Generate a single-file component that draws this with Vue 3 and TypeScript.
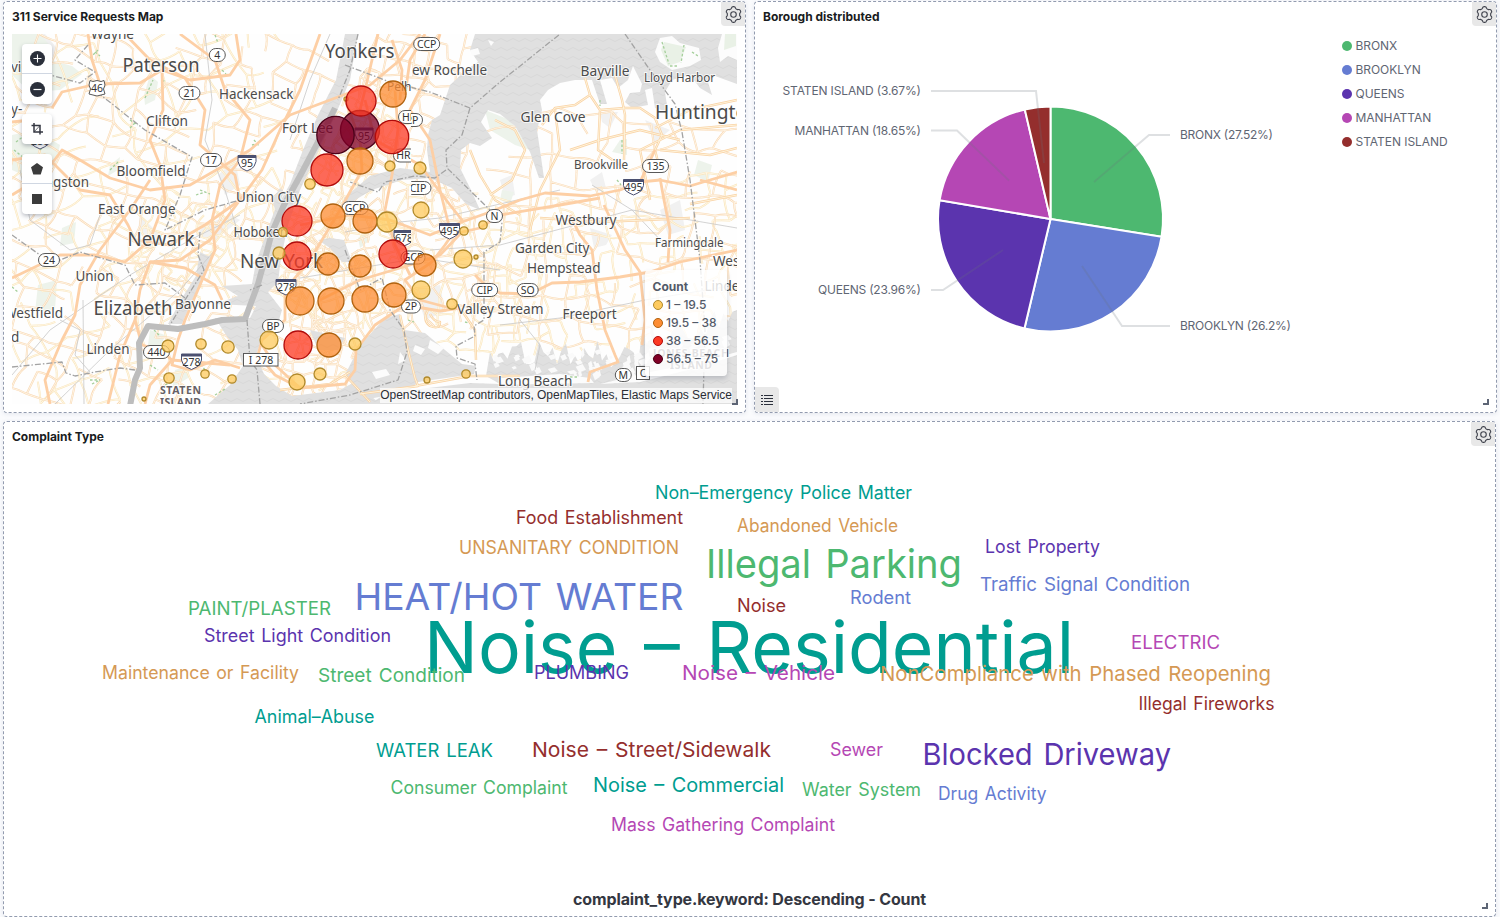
<script setup lang="ts">
interface Word { t: string; x: number; y: number; w: number; s: number; c: string }
interface Place { t: string; x: number; y: number; w?: number; s: number }
interface Pill { t: string; x: number; y: number; w: number; clip?: string }

const GREEN = '#4db870'
const BLUE = '#657cd2'
const PURPLE = '#5b34ae'
const PINK = '#b547b4'
const RED = '#942e2d'
const TEAL = '#009d90'
const ORANGE = '#d59954'

/* gear outline with six rounded teeth */
const gearPath = (() => {
  const pts: string[] = []
  for (let i = 0; i < 120; i++) {
    const a = (i / 120) * Math.PI * 2
    const k = Math.cos(6 * (a - Math.PI / 2))
    const r = 6.6 + 0.85 * Math.tanh(1.8 * k)
    pts.push(`${(8 + r * Math.cos(a)).toFixed(2)} ${(8 + r * Math.sin(a)).toFixed(2)}`)
  }
  return `M${pts.join('L')}Z`
})()

/* pie */
const slices = [
  { name: 'BRONX', pct: 27.52, color: GREEN },
  { name: 'BROOKLYN', pct: 26.2, color: BLUE },
  { name: 'QUEENS', pct: 23.96, color: PURPLE },
  { name: 'MANHATTAN', pct: 18.65, color: PINK },
  { name: 'STATEN ISLAND', pct: 3.67, color: RED },
]
const CX = 1050.5
const CY = 219
const R = 112.5
let turn = 0
const arcs = slices.map((s) => {
  const a0 = (turn / 100) * Math.PI * 2
  turn += s.pct
  const a1 = (turn / 100) * Math.PI * 2
  const p = (a: number) => `${(CX + R * Math.sin(a)).toFixed(2)} ${(CY - R * Math.cos(a)).toFixed(2)}`
  return { color: s.color, d: `M${CX} ${CY}L${p(a0)}A${R} ${R} 0 0 1 ${p(a1)}Z` }
})
const leaders = [
  '931,91 1036,91 1044,163',
  '931,130.5 957,130.5 1009,180.5',
  '931,290 943,290 1003,250',
  '1170,135 1149,135 1094,182',
  '1170,326 1122,326 1082,266',
]
const pieLabels = [
  { t: 'STATEN ISLAND (3.67%)', x: 782.5, y: 95, w: 138.5 },
  { t: 'MANHATTAN (18.65%)', x: 794.5, y: 135, w: 126.5 },
  { t: 'QUEENS (23.96%)', x: 818, y: 294, w: 103 },
  { t: 'BRONX (27.52%)', x: 1180, y: 139, w: 93 },
  { t: 'BROOKLYN (26.2%)', x: 1180, y: 330, w: 111 },
]

/* word cloud */
const words: Word[] = [
  { t: 'Noise – Residential', x: 424, y: 673, w: 650, s: 72, c: TEAL },
  { t: 'Illegal Parking', x: 706, y: 578, w: 256, s: 39.5, c: GREEN },
  { t: 'HEAT/HOT WATER', x: 354.5, y: 610, w: 329, s: 37, c: BLUE },
  { t: 'Blocked Driveway', x: 922.5, y: 765, w: 248.5, s: 30, c: PURPLE },
  { t: 'NonCompliance with Phased Reopening', x: 880, y: 681, w: 391, s: 20.5, c: ORANGE },
  { t: 'Noise – Street/Sidewalk', x: 532, y: 756.7, w: 239, s: 20.5, c: RED },
  { t: 'Noise – Commercial', x: 593, y: 791.8, w: 191, s: 20, c: TEAL },
  { t: 'Noise – Vehicle', x: 682, y: 680, w: 153, s: 20, c: PINK },
  { t: 'Street Condition', x: 318, y: 682, w: 147, s: 19, c: GREEN },
  { t: 'Traffic Signal Condition', x: 980, y: 590.7, w: 210, s: 18.5, c: BLUE },
  { t: 'Maintenance or Facility', x: 102, y: 679, w: 197, s: 18, c: ORANGE },
  { t: 'Non–Emergency Police Matter', x: 655, y: 499, w: 257, s: 18, c: TEAL },
  { t: 'Food Establishment', x: 516, y: 523.8, w: 167, s: 18, c: RED },
  { t: 'Abandoned Vehicle', x: 737, y: 531.8, w: 161, s: 18, c: ORANGE },
  { t: 'UNSANITARY CONDITION', x: 459, y: 554, w: 220, s: 18, c: ORANGE },
  { t: 'Lost Property', x: 985, y: 552.8, w: 115, s: 18, c: PURPLE },
  { t: 'Rodent', x: 850, y: 603.8, w: 61, s: 18, c: BLUE },
  { t: 'Noise', x: 737, y: 612, w: 49, s: 18, c: RED },
  { t: 'PAINT/PLASTER', x: 188, y: 614.8, w: 143, s: 18, c: GREEN },
  { t: 'Street Light Condition', x: 204, y: 642, w: 187, s: 18, c: PURPLE },
  { t: 'ELECTRIC', x: 1131, y: 649, w: 89, s: 18, c: PINK },
  { t: 'PLUMBING', x: 534, y: 678.8, w: 95, s: 18, c: PURPLE },
  { t: 'Illegal Fireworks', x: 1138.5, y: 710, w: 136, s: 18, c: RED },
  { t: 'Animal–Abuse', x: 254.5, y: 723, w: 120, s: 18, c: TEAL },
  { t: 'WATER LEAK', x: 376, y: 756.8, w: 117, s: 18, c: TEAL },
  { t: 'Sewer', x: 830, y: 755.8, w: 53, s: 18, c: PINK },
  { t: 'Consumer Complaint', x: 390.5, y: 793.8, w: 177, s: 18, c: GREEN },
  { t: 'Water System', x: 802, y: 796, w: 119, s: 18, c: GREEN },
  { t: 'Drug Activity', x: 938, y: 800, w: 108.5, s: 18, c: BLUE },
  { t: 'Mass Gathering Complaint', x: 611, y: 831, w: 224, s: 18, c: PINK },
]

/* street network, deterministic so the base map is stable between renders */
let seed = 7
const rnd = () => {
  seed = (seed * 16807) % 2147483647
  return seed / 2147483647
}
function streets(x0: number, y0: number, x1: number, y1: number, step: number, keep: number, rot: number): string {
  const cx = (x0 + x1) / 2
  const cy = (y0 + y1) / 2
  const nx = Math.ceil((x1 - x0) / step)
  const ny = Math.ceil((y1 - y0) / step)
  const grid: number[][][] = []
  for (let j = 0; j <= ny; j++) {
    const row: number[][] = []
    for (let i = 0; i <= nx; i++) {
      const x = x0 + i * step + (rnd() - 0.5) * step * 0.55 - cx
      const y = y0 + j * step + (rnd() - 0.5) * step * 0.55 - cy
      row.push([cx + x * Math.cos(rot) - y * Math.sin(rot), cy + x * Math.sin(rot) + y * Math.cos(rot)])
    }
    grid.push(row)
  }
  let d = ''
  const seg = (a: number[], b: number[]) => {
    const mx = (a[0] + b[0]) / 2 + (rnd() - 0.5) * step * 0.3
    const my = (a[1] + b[1]) / 2 + (rnd() - 0.5) * step * 0.3
    d += `M${a[0].toFixed(1)} ${a[1].toFixed(1)}Q${mx.toFixed(1)} ${my.toFixed(1)} ${b[0].toFixed(1)} ${b[1].toFixed(1)}`
  }
  for (let j = 0; j <= ny; j++) {
    for (let i = 0; i <= nx; i++) {
      if (i < nx && rnd() < keep) seg(grid[j][i], grid[j][i + 1])
      if (j < ny && rnd() < keep) seg(grid[j][i], grid[j + 1][i])
    }
  }
  return d
}
const roadsTan = [
  streets(-20, 10, 350, 430, 20, 0.66, 0.35),
  streets(360, 20, 470, 180, 15, 0.72, 0.25),
  streets(300, 200, 480, 330, 14, 0.75, -0.3),
  streets(480, 120, 780, 340, 23, 0.68, 0.1),
  streets(285, 320, 350, 395, 11, 0.8, 0.15),
].join('')
const roadsYellow = [
  streets(-20, 30, 340, 420, 24, 0.5, -0.4),
  streets(140, 200, 220, 290, 9, 0.6, 0.5),
  streets(330, 190, 540, 330, 15, 0.65, 0.2),
  streets(480, 190, 740, 345, 15, 0.45, -0.15),
  streets(300, 100, 360, 300, 9, 0.6, 0.45),
].join('')

/* ragged north shore of the southern bays, and the marsh islets inside them */
const southBay = (() => {
  let d = 'M486 376L490 352'
  for (let x = 494; x < 737; x += 4.5) {
    const base = x < 600 ? 352 : x < 640 ? 356 : 340 - (x - 640) * 0.22
    d += `L${x} ${(base + (rnd() - 0.5) * 26).toFixed(1)}`
  }
  return `${d}L737 310V404H370L382 396L420 389L470 383L500 384Z`
})()
const marsh = (() => {
  let d = ''
  for (let i = 0; i < 85; i++) {
    const x = 492 + rnd() * 235
    const y = 350 + rnd() * 24 - (x > 645 ? 14 : 0)
    const a = 2 + rnd() * 5
    const b = 2 + rnd() * 5
    d += `M${x.toFixed(1)} ${y.toFixed(1)}l${a.toFixed(1)} ${(-b / 2).toFixed(1)}l${(a / 2).toFixed(1)} ${b.toFixed(1)}l${(-a).toFixed(1)} ${(b / 2).toFixed(1)}z`
  }
  return d
})()

const highways = [
  'M12 195L40 178L56 158L62 150L80 160L110 178L150 190L190 185L225 165L250 150L290 115L330 100L370 85L400 60L420 34',
  'M12 122L40 119M52 108L62 92L97 84L140 83L162 70L190 80L230 75L240 60L236 34',
  'M88 34L92 60L100 84M162 70L163 110L150 140L160 165L165 200L150 240L125 262L95 255L60 255L12 278',
  'M12 160L45 155L60 170L80 190L110 195L128 225L135 240L170 245L205 225L240 200L262 170L280 130L300 90L320 34',
  'M125 34L150 60L185 78L205 110L200 145L235 175L240 200L210 240L180 260L150 262L140 290L135 320L120 355L108 404',
  'M50 404L45 380L62 340L75 315L80 285L100 250L130 210L150 180',
  'M180 34L215 60L225 90L250 120L240 160L220 185L212 220L215 250L200 285L185 320L178 340L172 365L190 370L215 360L240 368M262 345L275 365L300 388',
  'M150 262L185 268L215 285L222 300M135 320L142 345L160 350L172 360L230 365M172 360L150 385L145 404',
  'M345 100L360 140L362 170L340 210L310 260L285 290L285 320L262 340L258 355L275 375L300 388L345 384L355 370L356 350L375 325L405 305L440 311L460 308',
  'M300 225L350 215L390 220L430 235L462 222L490 212L520 200L545 193L590 196L620 190L640 182L660 180L690 186L710 180L737 172',
  'M365 100L375 140L420 165L437 188L450 205L462 220L445 245L432 262L405 280L420 300L450 308',
  'M395 90L398 130L392 175L385 210L395 245L410 275M440 34L425 80L410 110L430 140L435 165L440 190L450 230',
  'M320 300L360 280L410 265L440 255L462 232L480 228L500 215L560 205L600 198',
  'M475 275L485 285L500 293L530 294L552 283L580 282L620 277L650 272L680 262L737 250',
  'M570 215L580 235L592 250L597 290L605 330L615 355L618 362L590 372L588 382M604 205L625 250L640 272L645 320L642 345',
  'M660 178L664 200L670 230L668 262M700 180L737 190M640 182L655 150',
  'M378 34L372 60L365 90L360 110M392 40L402 70L400 100M425 34L410 60L405 95',
]
const localRoads = [
  'M555 110L560 150L540 190L530 230M585 78L590 95L575 105L555 108L542 125M590 95L600 110L625 108L640 108L655 118L662 135L655 150L660 170M615 75L622 100L625 115L624 160M600 110L598 150L620 165M640 150L680 130L737 125M655 128L690 110L737 100',
  'M490 195L512 180L525 150L515 130L495 120M470 150L480 175L495 200L520 215M640 150L650 200M570 150L600 140L640 130L680 140M660 150L710 155L737 148',
  'M400 315L408 350L415 378L418 386L360 394M415 386L470 376L520 376M345 375L370 402M280 390L330 384L350 372M460 308L475 330L476 360',
  'M428 310Q422 320 430 326Q440 330 440 322Q434 322 430 314M690 204L737 195M540 218L600 222L690 218',
]
const borders = [
  'M358 34L350 70L338 100',
  'M345 65L390 82L430 92L470 108L500 82L560 34M470 108L462 135L446 150L447 168L490 210L502 222L500 242L484 252L484 320L474 326L475 336L456 346L457 358L475 364L477 380M446 170L435 178L415 176L385 182L378 192L350 182',
  'M625 34L650 70L675 104L682 132L690 180L700 260L705 330L703 404',
  'M97 92L145 130L192 157L180 195L165 230L205 210L240 200M200 232L198 255L204 270L185 300L170 325',
  'M88 45L75 60L95 72L80 83L50 75M12 235L40 255L60 260L80 252L125 265L135 285L165 283L185 298',
  'M12 367L62 362L66 373L75 376L95 372L120 368L135 370',
  'M262 285L250 290M345 250L360 290L382 278L390 310L404 330L407 352L398 380L350 395L300 404M247 320L250 360L257 370L260 404',
]
const rails = [
  'M12 375L50 330L130 275L190 240L240 215M55 404L110 350L180 290L215 250M83 300L84 404M205 34L212 100L205 140L225 190L240 240M330 34L310 80L290 140',
  'M345 232L400 222L440 218L560 190M430 250L500 245L632 210L737 228M592 185L632 210L665 245',
  'M20 170L30 220L70 250L90 245L100 215M300 278L420 258L500 270M60 320L80 330L75 355L90 372M500 325L560 318L645 300L737 285M520 320L540 345L535 370',
]
const parks = [
  'M50 60L72 66L82 74L60 90L30 92L12 75V34H40L52 48Z', 'M12 135L35 130L60 145L55 165L30 178L12 170Z',
  'M150 75L158 82L155 100L145 105L144 95Z', 'M110 165L120 157L118 170L108 176Z', 'M62 228L76 222L74 243L60 246Z',
  'M620 140L627 139L627 155L612 152Z', 'M698 160L712 165L708 182L694 175Z', 'M485 110L510 120L530 150L515 145L490 130Z',
  'M38 285L57 280L55 310L35 312Z', 'M175 370L190 365L188 378L172 388Z', 'M502 190L514 192L510 204L500 200Z',
  'M280 200L287 197L284 212L277 214Z', 'M358 238L366 232L370 240L360 248Z', 'M150 330L165 335L160 350L148 345Z',
]
const coastParks = ['M664 42L686 47L680 62L668 66L661 50Z', 'M725 34H736V46L724 50Z']
const parkSpots = [
  'M40 150l6 -6M14 150l10 8M16 142l8 -6M90 58l8 -8M95 52l5 4M145 98l8 -18M130 128l6 -6M130 120l8 5M110 170l8 -8M162 86l2 -6',
  'M252 145l8 -2M254 140l5 6M200 190l10 4M196 195l9 -3M215 35l3 8M222 70l4 4M12 287l6 5M150 365l8 5M90 380l10 0M92 384l8 -4M154 330l6 6M205 370l-6 -8M215 395l10 -6M165 385l8 -3',
  'M662 42l7 22M684 45l-3 18M670 66h8M600 100l0 6M692 52l6 4M408 320l6 2M465 322l8 2M570 377l8 0M617 180l4 5M622 140v14',
]
const towns = [
  'M600 112L618 112L610 128L602 122Z', 'M590 180L602 172L606 188L596 192Z', 'M660 210L680 200L685 230L668 235Z', 'M500 180L512 175L515 195L505 198Z',
  'M218 175L235 160L240 185L225 195Z', 'M195 235L215 240L240 220L230 215L205 225Z', 'M395 380L430 370L440 375L400 385Z', 'M415 290L440 285L445 312L425 320Z',
  'M22 40L52 60L60 52L45 34H22Z', 'M590 228L612 235L606 245L594 248Z', 'M645 120L670 130L655 142Z', 'M140 215L160 235L150 248L138 230Z',
]
const water = [
  'M345 34H358L350 80L335 116L316 156L300 190L288 225L281 258L278 282L268 292L282 310L276 330L262 338L256 356L264 374L276 386L292 396L340 390L358 380L362 388L380 404H208L230 385L243 366L238 350L226 335L215 318L250 318L256 306L216 304L238 296L222 286L252 284L256 262L264 240L274 212L290 184L303 150L318 115L336 80Z',
  'M200 252L212 258L200 284L190 305L182 324L168 324L182 298L196 276Z',
  'M475 34H737V84L715 76L708 82L712 95L700 88L690 75L672 80L665 92L668 112L655 108L652 88L645 90L648 105L632 108L625 102L630 93L640 92L642 84L633 66L628 80L618 88L612 78L600 80L607 104L600 104L592 80L575 80L560 83L548 90L540 100L542 110L537 130L540 150L544 178L539 178L530 152L515 126L500 114L488 110L481 122L492 138L480 146L470 143L461 150L460 168L472 192L480 210L466 204L452 188L430 178L402 180L372 190L345 206L344 198L370 176L400 168L430 172L427 150L428 135L432 120L440 115L445 100L450 85L466 70L478 62L470 50Z',
  'M345 375L360 345L385 318L400 314L404 330L425 333L445 350L462 364L476 366L474 374L446 378L418 382L408 392L368 399L358 388Z',
  southBay,
  'M272 200L280 188L284 192L276 212Z', 'M330 238L344 240L352 262L342 262L330 248L318 240Z', 'M310 330L345 338L338 350L318 350Z',
]
const islands = [
  'M655 52L660 38L672 36L680 43L699 48L701 60L690 66L672 70L660 62Z', 'M722 34H737V60L728 56L720 62L718 48Z',
  'M415 345l10 4l-4 6l-8 -4zM430 340l14 8l-6 6l-10 -6zM400 352l6 8l-8 4z',
  'M500 378L560 374L590 378L594 383L540 384L502 385Z', 'M600 384L650 372L700 362L737 352V355L700 367L640 382Z', 'M372 372l14 -3l4 6l-14 4z',
  'M470 50l8 -2l2 6l-8 2zM488 40l6 2l-3 4z',
]
const places: Place[] = [
  { t: 'Wayne', x: 91, y: 38.5, w: 43, s: 14 }, { t: 'Paterson', x: 122.5, y: 72, w: 77, s: 19 },
  { t: 'Hackensack', x: 219, y: 98.5, w: 74.5, s: 13.5 }, { t: 'Clifton', x: 146, y: 126, w: 42, s: 13.5 },
  { t: 'Fort Lee', x: 282, y: 133, w: 51, s: 13.5 }, { t: 'Bloomfield', x: 116.5, y: 176, w: 69, s: 13.5 },
  { t: 'Livingston', x: 24, y: 186.5, w: 65, s: 13.5 }, { t: 'East Orange', x: 98, y: 213.5, w: 77.5, s: 13.5 },
  { t: 'Union City', x: 236, y: 202, w: 65, s: 13.5 }, { t: 'Newark', x: 127.5, y: 246, w: 67, s: 19 },
  { t: 'Hoboken', x: 233.5, y: 237, w: 54, s: 13.5 }, { t: 'New York', x: 240, y: 268, w: 83, s: 19 },
  { t: 'Union', x: 75.5, y: 281, w: 38, s: 13.5 }, { t: 'Elizabeth', x: 93.5, y: 314.5, w: 79, s: 19 },
  { t: 'Bayonne', x: 175, y: 308.5, w: 56, s: 13.5 }, { t: 'Westfield', x: 4, y: 318, w: 59, s: 13.5 },
  { t: 'd', x: 11, y: 342, s: 13.5 }, { t: 'vi', x: 11, y: 72, s: 13.5 }, { t: 'y-', x: 11, y: 114, s: 13.5 },
  { t: 'Linden', x: 86.5, y: 353.5, w: 43, s: 13.5 }, { t: 'Yonkers', x: 325, y: 58, w: 69.5, s: 19 },
  { t: 'ew Rochelle', x: 412, y: 75, w: 75, s: 13.5 }, { t: 'Pelh', x: 387, y: 90.5, w: 24.5, s: 13 },
  { t: 'Glen Cove', x: 520.5, y: 122, w: 65, s: 13.5 }, { t: 'Bayville', x: 580.5, y: 76, w: 49, s: 13.5 },
  { t: 'Lloyd Harbor', x: 644, y: 82, w: 71, s: 12 }, { t: 'Huntington', x: 655, y: 118.5, w: 104, s: 19 },
  { t: 'Brookville', x: 574, y: 169, w: 54, s: 12 }, { t: 'Westbury', x: 555.5, y: 225, w: 61, s: 13.5 },
  { t: 'Garden City', x: 515, y: 253, w: 74.5, s: 13.5 }, { t: 'Hempstead', x: 527, y: 272.5, w: 73.5, s: 13.5 },
  { t: 'Farmingdale', x: 655, y: 246.5, w: 68.5, s: 12 }, { t: 'West Babylon', x: 713, y: 266, s: 13.5 },
  { t: 'Lindenhurst', x: 704.5, y: 291, s: 13.5 }, { t: 'Valley Stream', x: 457, y: 314, w: 86.5, s: 13.5 },
  { t: 'Freeport', x: 562.5, y: 319, w: 54, s: 13.5 }, { t: 'Long Beach', x: 498, y: 385.5, w: 74.5, s: 13.5 },
]
const pills: Pill[] = [
  { t: 'CCP', x: 426.7, y: 44, w: 26 }, { t: '4', x: 217.3, y: 55, w: 16 }, { t: '21', x: 189.5, y: 93, w: 21 },
  { t: '17', x: 211, y: 160, w: 21 }, { t: '24', x: 49, y: 260, w: 21 }, { t: '135', x: 655.5, y: 166, w: 26 },
  { t: 'CIP', x: 418, y: 188, w: 26, clip: 'url(#east)' }, { t: 'RP', x: 412, y: 120, w: 21, clip: 'url(#east)' },
  { t: 'HP', x: 409, y: 117, w: 21, clip: 'url(#west)' }, { t: 'HRP', x: 406.5, y: 155.5, w: 26, clip: 'url(#west)' },
  { t: 'GCP', x: 355, y: 208, w: 26 }, { t: 'GCP', x: 413, y: 257.5, w: 24 },
  { t: 'N', x: 494.5, y: 216, w: 16 }, { t: 'CIP', x: 484.7, y: 290, w: 26 }, { t: 'SO', x: 527.7, y: 290, w: 21 },
  { t: '2P', x: 411, y: 306.5, w: 19 }, { t: 'BP', x: 273, y: 326, w: 21 }, { t: 'M', x: 623.3, y: 375, w: 16 },
  { t: '440', x: 156.5, y: 352, w: 26 },
]
const interstates: Pill[] = [
  { t: '95', x: 247, y: 163, w: 18 }, { t: '95', x: 364, y: 135.5, w: 18 }, { t: '495', x: 633.5, y: 187, w: 20 },
  { t: '495', x: 449.5, y: 231, w: 20 }, { t: '678', x: 404, y: 238, w: 20, clip: 'url(#west)' }, { t: '278', x: 286, y: 287, w: 20 },
  { t: '278', x: 191.5, y: 361.5, w: 20 }, { t: '280', x: 40, y: 141, w: 20 },
]
const tiers = [
  { range: '1 – 19.5', fill: '#fecb5f', line: '#b18a2c' },
  { range: '19.5 – 38', fill: '#fd8d33', line: '#b0620f' },
  { range: '38 – 56.5', fill: '#fc3a24', line: '#b00b0b' },
  { range: '56.5 – 75', fill: '#800026', line: '#4a0018' },
]
/* x, y, radius, tier */
const spots: number[][] = [
  [346, 99, 2, 0], [360, 130, 19.5, 3], [335.5, 135, 18.7, 3], [361, 101, 15, 2], [393, 94, 13, 1], [392, 137, 16.7, 2], [327, 170, 16, 2],
  [360, 161, 13, 1], [390, 166, 5, 0], [420, 168, 6, 0], [310, 184, 5.2, 0], [421, 210, 8, 0], [333, 216, 12, 1], [365, 221, 12, 1],
  [387, 222, 10, 0], [297, 221, 15, 2], [297, 256, 14, 2], [279, 253, 6, 0], [283, 232, 4.5, 0], [328, 264, 11, 1], [360, 266, 11, 1],
  [393, 254, 14, 2], [425, 265, 11, 1], [463, 259, 9, 0], [476, 257, 2, 0], [464, 231, 4.2, 0], [483, 225, 4.2, 0], [300, 301, 14, 1],
  [331, 301, 13, 1], [365, 299, 13, 1], [394, 295, 12, 1], [421, 290, 9, 0], [452, 304, 5.2, 0], [298, 345, 14, 2], [329, 345, 12, 1],
  [355, 344, 6, 0], [269, 340, 9, 0], [297, 382, 8, 0], [320, 374, 6, 0], [427, 380, 3, 0], [466, 374, 4.2, 0], [168, 346, 6, 0],
  [201, 344, 5.2, 0], [228, 347, 6.2, 0], [169, 378, 5.2, 0], [205, 374, 4.2, 0], [232, 379, 4.2, 0], [144, 399, 2, 0],
]
</script>

<template>
  <main class="dashboard">
    <section class="panel">
      <header class="head"><h2>311 Service Requests Map</h2></header>
      <button class="gear"><svg width="17" height="17" viewBox="0 0 16 16"><path :d="gearPath" /><circle cx="8" cy="8" r="2.6" /></svg></button>
      <div class="map">
        <svg class="base" width="725" height="370" viewBox="12 34 725 370">
          <defs>
            <pattern id="waves" width="12" height="9" patternUnits="userSpaceOnUse">
              <rect width="12" height="9" fill="#e0e0e0" />
              <path d="M0 4Q3 7 6 4T12 4" fill="none" stroke="#d8d8d8" stroke-width="1" />
            </pattern>
            <clipPath id="west"><rect x="12" y="34" width="399" height="370" /></clipPath>
            <clipPath id="east"><rect x="411" y="34" width="326" height="370" /></clipPath>
          </defs>
          <rect x="12" y="34" width="725" height="370" fill="#fefefe" />
          <path v-for="(d, i) in towns" :key="'t' + i" :d="d" fill="#f1f1f1" />
          <path v-for="(d, i) in parks" :key="'p' + i" :d="d" fill="#edf3eb" />
          <path :d="roadsYellow" class="casing yellow" />
          <path :d="roadsYellow" class="core" />
          <path :d="roadsTan" class="casing tan" />
          <path :d="roadsTan" class="core" />
          <path v-for="(d, i) in water" :key="'w' + i" :d="d" fill="url(#waves)" />
          <path :d="marsh" fill="#fafafa" />
          <path v-for="(d, i) in islands" :key="'i' + i" :d="d" fill="#fcfcfc" />
          <path v-for="(d, i) in coastParks" :key="'cp' + i" :d="d" fill="#e9f1e6" />
          <path v-for="(d, i) in parkSpots" :key="'g' + i" :d="d" class="park-edge" />
          <path v-for="(d, i) in rails" :key="'r' + i" :d="d" class="rail" />
          <path v-for="(d, i) in localRoads" :key="'l' + i" :d="d" class="casing local" />
          <path v-for="(d, i) in localRoads" :key="'lc' + i" :d="d" class="core warm" />
          <path v-for="(d, i) in highways" :key="'h' + i" :d="d" class="highway" />
          <path d="M335 108L318 142L300 176L284 205L272 232L266 255L258 284L245 319L222 320L205 324L178 329L148 326L139 343L140 368L135 380L130 406" class="channel" />
          <path v-for="(d, i) in borders" :key="'b' + i" :d="d" class="border" />

          <g class="labels">
            <text v-for="(p, i) in places" :key="'n' + i" :x="p.x" :y="p.y" :font-size="p.s" :textLength="p.w" lengthAdjust="spacingAndGlyphs">{{ p.t }}</text>
            <g class="region">
              <text x="160" y="394" textLength="41">STATEN</text>
              <text x="160" y="406" textLength="41">ISLAND</text>
              <text x="653" y="357" textLength="76">JONES BEACH</text>
              <text x="670" y="369" textLength="42">ISLAND</text>
            </g>
          </g>
          <g class="shields">
            <g v-for="(p, i) in pills" :key="'s' + i" :clip-path="p.clip">
              <rect :x="p.x - p.w / 2" :y="p.y - 6.5" :width="p.w" height="13" rx="6.5" />
              <text :x="p.x" :y="p.y + 3.8">{{ p.t }}</text>
            </g>
            <g v-for="(p, i) in interstates" :key="'j' + i" :clip-path="p.clip">
              <g :transform="`translate(${p.x} ${p.y})`">
                <path :d="`M${-p.w / 2} -7.5H${p.w / 2}Q${p.w / 2 + 1} -1 ${p.w / 2 - 2} 3.5Q5 6 0 8Q-5 6 ${2 - p.w / 2} 3.5Q${-p.w / 2 - 1} -1 ${-p.w / 2} -7.5Z`" class="inter" />
                <path :d="`M${-p.w / 2} -7.5H${p.w / 2}V-5H${-p.w / 2}Z`" class="cap" />
                <text y="4">{{ p.t }}</text>
              </g>
            </g>
            <path d="M90 80.500L93 81.500L97 80.500L101 81.500L104 80.500L105 85L103.500 89L105 94L101 95L97 96L93 95L89 94L90.500 89L89 85Z" />
            <text x="97" y="92">46</text>
            <rect x="243.500" y="353.500" width="34.500" height="12.500" />
            <text x="261" y="363.700">I 278</text>
            <rect x="636.500" y="366.500" width="13" height="13" />
            <text x="643" y="377">C</text>
          </g>
          <g fill-opacity="0.76">
            <circle v-for="(c, i) in spots" :key="'c' + i" :cx="c[0]" :cy="c[1]" :r="c[2]" :fill="tiers[c[3]].fill" :stroke="tiers[c[3]].line" stroke-width="1.3" />
          </g>
        </svg>
        <div class="tools">
          <div class="tool-group">
            <button><svg width="15" height="15" viewBox="0 0 15 15"><circle cx="7.500" cy="7.500" r="7.500" fill="#2b303b" /><path d="M3.500 7.500H11.500M7.500 3.500V11.500" stroke="#fff" stroke-width="1.100" /></svg></button>
            <button><svg width="15" height="15" viewBox="0 0 15 15"><circle cx="7.500" cy="7.500" r="7.500" fill="#2b303b" /><path d="M3.500 7.500H11.500" stroke="#fff" stroke-width="1.200" /></svg></button>
          </div>
          <div class="tool-group">
            <button><svg width="12" height="12" viewBox="0 0 12 12" fill="none" stroke="#343741"><path d="M0.500 2.500H9V11.500M3 0V9H12" stroke-width="1.500" /><path d="M3 9L9 2.500" stroke-width="0.700" /></svg></button>
          </div>
          <div class="tool-group">
            <button><svg width="12" height="12" viewBox="0 0 12 12"><path d="M6 0L12 4.300L9.700 11.500H2.300L0 4.300Z" fill="#3b3b3b" /></svg></button>
            <button><svg width="10" height="10" viewBox="0 0 10 10"><rect width="10" height="10" fill="#3b3b3b" /></svg></button>
          </div>
        </div>
        <div class="map-legend">
          <strong>Count</strong>
          <div v-for="t in tiers" :key="t.range" class="tier">
            <svg width="10" height="10" viewBox="0 0 10 10"><circle cx="5" cy="5" r="4.500" :fill="t.fill" :stroke="t.line" /></svg>
            <span>{{ t.range }}</span>
          </div>
        </div>
        <div class="credit">OpenStreetMap contributors, OpenMapTiles, Elastic Maps Service</div>
      </div>
      <i class="resize"></i>
    </section>

    <section class="panel">
      <header class="head"><h2>Borough distributed</h2></header>
      <button class="gear"><svg width="17" height="17" viewBox="0 0 16 16"><path :d="gearPath" /><circle cx="8" cy="8" r="2.6" /></svg></button>
      <div class="pie-body">
        <svg class="pie" width="565" height="370" viewBox="763 34 565 370">
          <path v-for="a in arcs" :key="a.color" :d="a.d" :fill="a.color" stroke="#fff" stroke-width="2" />
          <polyline v-for="l in leaders" :key="l" :points="l" class="leader" />
          <text v-for="l in pieLabels" :key="l.t" :x="l.x" :y="l.y" :textLength="l.w" class="pie-label">{{ l.t }}</text>
        </svg>
        <ul class="pie-legend">
          <li v-for="s in slices" :key="s.name">
            <svg width="10" height="10" viewBox="0 0 10 10"><circle cx="5" cy="5" r="5" :fill="s.color" /></svg>
            <span>{{ s.name }}</span>
          </li>
        </ul>
      </div>
      <button class="list"><svg width="12" height="10" viewBox="0 0 12 10" shape-rendering="crispEdges"><path d="M0 0.500H2M3 0.500H12M0 3.500H2M3 3.500H12M0 6.500H2M3 6.500H12M0 9.500H2M3 9.500H12" stroke="#2b303b" stroke-width="1" /></svg></button>
      <i class="resize"></i>
    </section>

    <section class="panel wide">
      <header class="head"><h2>Complaint Type</h2></header>
      <button class="gear"><svg width="17" height="17" viewBox="0 0 16 16"><path :d="gearPath" /><circle cx="8" cy="8" r="2.6" /></svg></button>
      <svg class="cloud" width="1475" height="430" viewBox="12 454 1475 430">
        <text v-for="w in words" :key="w.t" :x="w.x" :y="w.y" :font-size="w.s" :fill="w.c" :textLength="w.w" lengthAdjust="spacingAndGlyphs">{{ w.t }}</text>
      </svg>
      <div class="caption">complaint_type.keyword: Descending - Count</div>
      <i class="resize"></i>
    </section>
  </main>
</template>

<style>
body {
  margin: 0;
  background: #fafbfd;
  overflow: hidden;
}
</style>

<style scoped>
.dashboard {
  box-sizing: border-box;
  width: 1500px;
  height: 917px;
  padding: 1px 3px 0;
  display: grid;
  grid-template-columns: 743px 743px;
  grid-template-rows: 412px 496px;
  gap: 8px;
  font-family: Inter, "Liberation Sans", sans-serif;
}
.panel {
  position: relative;
  box-sizing: border-box;
  display: flex;
  flex-direction: column;
  padding: 0 8px;
  border: 1px dashed #929baf;
  border-radius: 4px;
  background: #fff;
  box-shadow: 0 1px 4px rgba(90, 105, 140, 0.14);
}
.wide {
  grid-column: 1 / 3;
  width: 1493px;
}
.head {
  height: 32px;
  flex: none;
}
h2 {
  margin: 0;
  padding-top: 6px;
  font-size: 12px;
  line-height: 18px;
  font-weight: 700;
  letter-spacing: -0.02px;
  color: #1a1c21;
}
button {
  display: flex;
  align-items: center;
  justify-content: center;
  border: 0;
  padding: 0;
  background: none;
}
.gear {
  position: absolute;
  top: 0;
  right: 0;
  width: 24px;
  height: 24px;
  background: #e8e8e8;
  border-radius: 0 3px 0 4px;
}
.gear svg {
  fill: none;
  stroke: #40434d;
  stroke-width: 1.05;
}
.list {
  position: absolute;
  left: 0;
  bottom: 0;
  width: 24px;
  height: 25px;
  background: #e8e8e8;
  border-radius: 0 4px 0 3px;
}
.resize {
  position: absolute;
  right: 7px;
  bottom: 7px;
  width: 4px;
  height: 4px;
  border-right: 2px solid #5d6575;
  border-bottom: 2px solid #5d6575;
}
.map {
  position: relative;
  width: 725px;
  height: 370px;
  overflow: hidden;
}
.base { display: block; }
.base path { stroke-linejoin: round; }
.casing { fill: none; stroke-width: 2; }
.tan { stroke: #f9d9b4; }
.yellow { stroke: #fae6bb; }
.local { stroke: #f9d3a6; stroke-width: 2.4; }
.core { fill: none; stroke: #fffaf0; stroke-width: 0.8; }
.warm { stroke: #fff3da; stroke-width: 1; }
.highway { fill: none; stroke: #fdcfa5; stroke-width: 2.8; }
.rail { fill: none; stroke: #c8c8c8; stroke-width: 0.8; }
.border { fill: none; stroke: #a3a3a3; stroke-width: 1.3; stroke-dasharray: 6 2 1.5 2; }
.channel { fill: none; stroke: #bdbdbd; stroke-width: 6; }
.park-edge { fill: none; stroke: #a5cf9b; stroke-width: 1.3; stroke-dasharray: 2.5 2; }
.labels text {
  font-family: "Noto Sans", sans-serif;
  fill: #4b4b4b;
  stroke: rgba(255, 255, 255, 0.75);
  stroke-width: 2px;
  paint-order: stroke;
}
.labels .region text {
  font-size: 10.5px;
  font-weight: 700;
  fill: #666064;
}
.shields rect,
.shields path {
  fill: #fff;
  stroke: #595959;
  stroke-width: 1;
}
.shields .inter { stroke: #4b5070; }
.shields .cap { fill: #4b5070; stroke: none; }
.shields text {
  font: 10.5px "Noto Sans", sans-serif;
  fill: #333;
  text-anchor: middle;
}
.tools {
  position: absolute;
  left: 10px;
  top: 10px;
  display: flex;
  flex-direction: column;
  gap: 10px;
}
.tool-group {
  width: 30px;
  border-radius: 4px;
  background: #fff;
  box-shadow: 0 2px 4px rgba(60, 70, 90, 0.35);
}
.tool-group button { box-sizing: border-box; width: 30px; height: 30px; }
.tool-group button:first-child:not(:last-child) { height: 29px; }
.tool-group button + button { height: 31px; border-top: 1px solid #d0d7e2; }
.map-legend {
  position: absolute;
  left: 633px;
  top: 236px;
  box-sizing: border-box;
  width: 82px;
  height: 106px;
  padding: 8px 7.5px;
  border-radius: 4px;
  background: rgba(255, 255, 255, 0.82);
  box-shadow: 0 3px 5px rgba(60, 70, 90, 0.22);
  font-size: 12px;
  line-height: 18px;
  color: #535a68;
}
.map-legend strong {
  display: block;
  height: 17.5px;
  font-weight: 700;
}
.tier {
  display: flex;
  align-items: center;
  gap: 3.5px;
  font-weight: 500;
  white-space: nowrap;
}
.credit {
  position: absolute;
  right: 5px;
  bottom: 1px;
  height: 15px;
  background: rgba(255, 255, 255, 0.72);
  font: 12px/15px "Liberation Sans", Arial, sans-serif;
  letter-spacing: -0.02px;
  color: #2a2d35;
  white-space: nowrap;
}
.pie-body {
  display: flex;
  height: 370px;
}
.pie { flex: none; }
.leader {
  fill: none;
  stroke: #69707d;
  stroke-opacity: 0.22;
  stroke-width: 2;
}
.pie-label {
  font-size: 12px;
  fill: #5f6673;
}
.pie-legend {
  margin: 0;
  padding: 0 0 0 14px;
  list-style: none;
  font-size: 12px;
  line-height: 24px;
  color: #5f6673;
}
.pie-legend li {
  display: flex;
  align-items: center;
  gap: 3.5px;
  white-space: nowrap;
  letter-spacing: -0.05px;
}
.cloud {
  flex: none;
  display: block;
  word-spacing: 0.09em;
}
.cloud text { word-spacing: 0.09em; }
.caption {
  text-align: center;
  font-size: 16px;
  line-height: 30px;
  font-weight: 700;
  letter-spacing: -0.13px;
  color: #343741;
}
</style>
